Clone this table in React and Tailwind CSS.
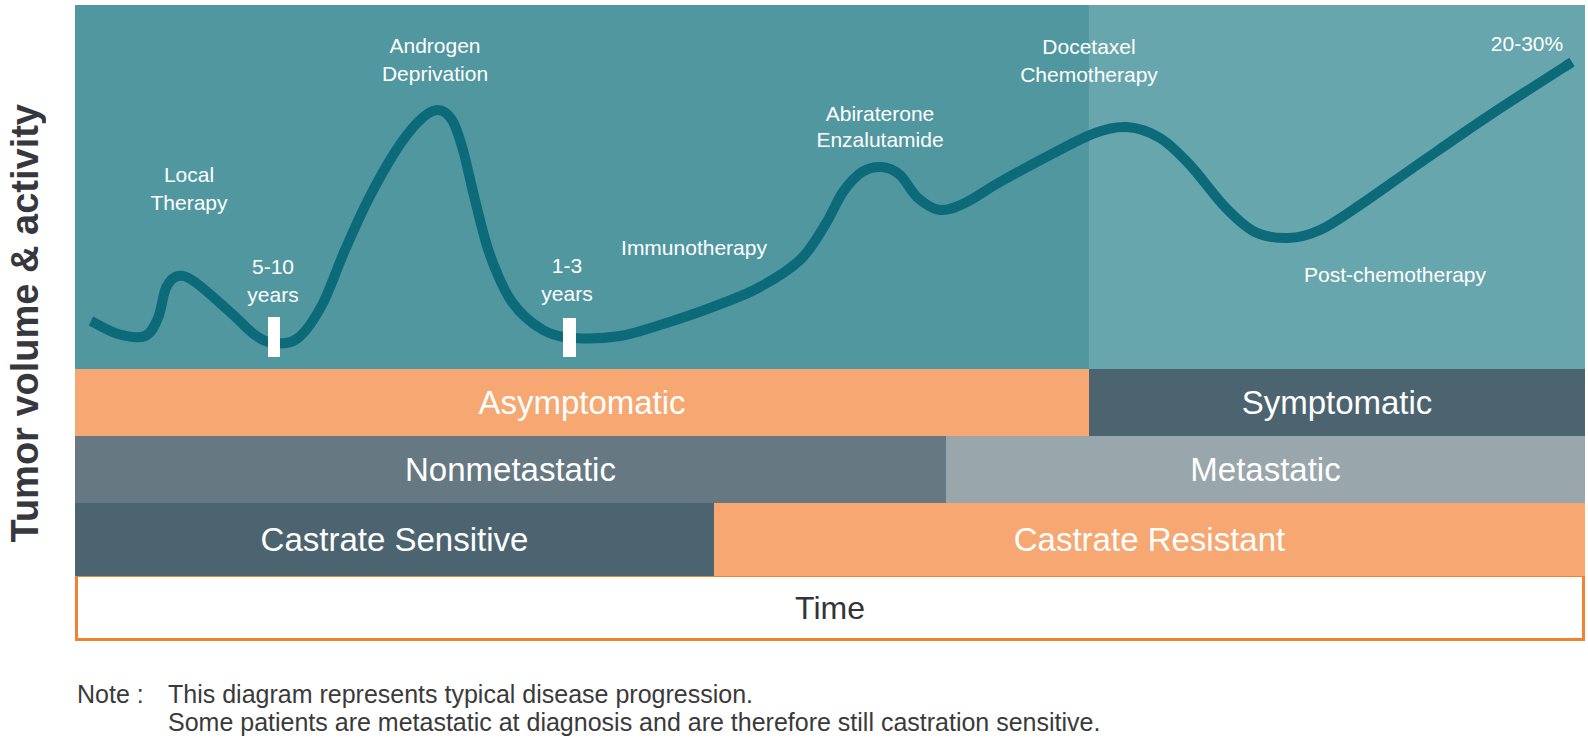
const curve = [
  [91, 321], [118, 334], [145, 336], [158, 318], [166, 288], [178, 276], [195, 282],
  [230, 312], [255, 335], [274, 343], [298, 338], [322, 305], [345, 250], [368, 200],
  [395, 152], [418, 122], [437, 110], [452, 120], [463, 150], [475, 200], [490, 255],
  [512, 302], [543, 330], [575, 338], [620, 336], [660, 325], [710, 308], [758, 288],
  [800, 260], [825, 225], [843, 192], [862, 172], [882, 167], [900, 175], [918, 198],
  [940, 210], [965, 203], [1000, 182], [1050, 155], [1095, 133], [1127, 127],
  [1160, 138], [1190, 165], [1225, 207], [1255, 232], [1288, 238], [1320, 230],
  [1360, 205], [1420, 163], [1490, 115], [1572, 62],
];

// catmull-rom -> cubic bezier
function smoothPath(pts) {
  let d = `M ${pts[0][0]} ${pts[0][1]}`;
  for (let i = 0; i < pts.length - 1; i++) {
    const p0 = pts[i - 1] || pts[i];
    const p1 = pts[i];
    const p2 = pts[i + 1];
    const p3 = pts[i + 2] || p2;
    const c1x = p1[0] + (p2[0] - p0[0]) / 6;
    const c1y = p1[1] + (p2[1] - p0[1]) / 6;
    const c2x = p2[0] - (p3[0] - p1[0]) / 6;
    const c2y = p2[1] - (p3[1] - p1[1]) / 6;
    d += ` C ${c1x.toFixed(1)} ${c1y.toFixed(1)}, ${c2x.toFixed(1)} ${c2y.toFixed(1)}, ${p2[0]} ${p2[1]}`;
  }
  return d;
}

function Label({ className, children }) {
  return (
    <div
      className={`absolute -translate-x-1/2 text-center text-[21px] leading-7 text-white whitespace-nowrap ${className}`}
    >
      {children}
    </div>
  );
}

function Bar({ className, children }) {
  return (
    <div className={`flex items-center justify-center text-[33px] text-white ${className}`}>
      {children}
    </div>
  );
}

export default function App() {
  return (
    <div
      className="w-[1588px] h-[739px] bg-white overflow-hidden"
      style={{ fontFamily: '"Liberation Sans", Arial, sans-serif' }}
    >
      <div className="flex pt-[5px]">
        {/* Y axis label */}
        <div className="w-[75px] h-[636px] flex items-center pl-[4px]">
          <div className="[writing-mode:vertical-rl] rotate-180 text-[38px] leading-[42px] font-bold text-[#37383f] whitespace-nowrap">
            Tumor volume &amp; activity
          </div>
        </div>

        <div className="w-[1510px] flex flex-col">
          {/* Chart area */}
          <div className="relative h-[364px] flex">
            <div className="w-[1014px] bg-[#5197a0]" />
            <div className="flex-1 bg-[#68a6ae]" />

            <svg
              className="absolute inset-0"
              width="1510"
              height="364"
              viewBox="75 5 1510 364"
            >
              <path
                d={smoothPath(curve)}
                fill="none"
                stroke="#0d6b79"
                strokeWidth="10"
                strokeLinecap="butt"
                strokeLinejoin="round"
              />
              <rect x="268" y="317" width="12" height="40" fill="#ffffff" />
              <rect x="563" y="318" width="13" height="39" fill="#ffffff" />
            </svg>

            <Label className="left-[114px] top-[156px]">Local<br />Therapy</Label>
            <Label className="left-[360px] top-[27px]">Androgen<br />Deprivation</Label>
            <Label className="left-[198px] top-[248px]">5-10<br />years</Label>
            <Label className="left-[492px] top-[247px]">1-3<br />years</Label>
            <Label className="left-[619px] top-[229px]">Immunotherapy</Label>
            <Label className="left-[805px] top-[96px] leading-[26px]">Abiraterone<br />Enzalutamide</Label>
            <Label className="left-[1014px] top-[28px]">Docetaxel<br />Chemotherapy</Label>
            <Label className="left-[1452px] top-[25px]">20-30%</Label>
            <Label className="left-[1320px] top-[256px]">Post-chemotherapy</Label>
          </div>

          {/* Stage bars */}
          <div className="flex h-[67px]">
            <Bar className="w-[1014px] bg-[#f7a872]">Asymptomatic</Bar>
            <Bar className="flex-1 bg-[#4c6470]">Symptomatic</Bar>
          </div>
          <div className="flex h-[67px]">
            <Bar className="w-[871px] bg-[#667983]">Nonmetastatic</Bar>
            <Bar className="flex-1 bg-[#99a7ad]">Metastatic</Bar>
          </div>
          <div className="flex h-[73px]">
            <Bar className="w-[639px] bg-[#4c6470]">Castrate Sensitive</Bar>
            <Bar className="flex-1 bg-[#f7a872]">Castrate Resistant</Bar>
          </div>

          <div className="h-[65px] border-[3px] border-t border-[#f08232] flex items-center justify-center text-[32px] text-[#333338]">
            Time
          </div>
        </div>
      </div>

      {/* Note */}
      <div className="flex pl-[77px] mt-[39px] text-[25px] leading-7 text-[#3a3a3a]">
        <div className="w-[91px]">Note :</div>
        <div>
          <div>This diagram represents typical disease progression.</div>
          <div>Some patients are metastatic at diagnosis and are therefore still castration sensitive.</div>
        </div>
      </div>
    </div>
  );
}
